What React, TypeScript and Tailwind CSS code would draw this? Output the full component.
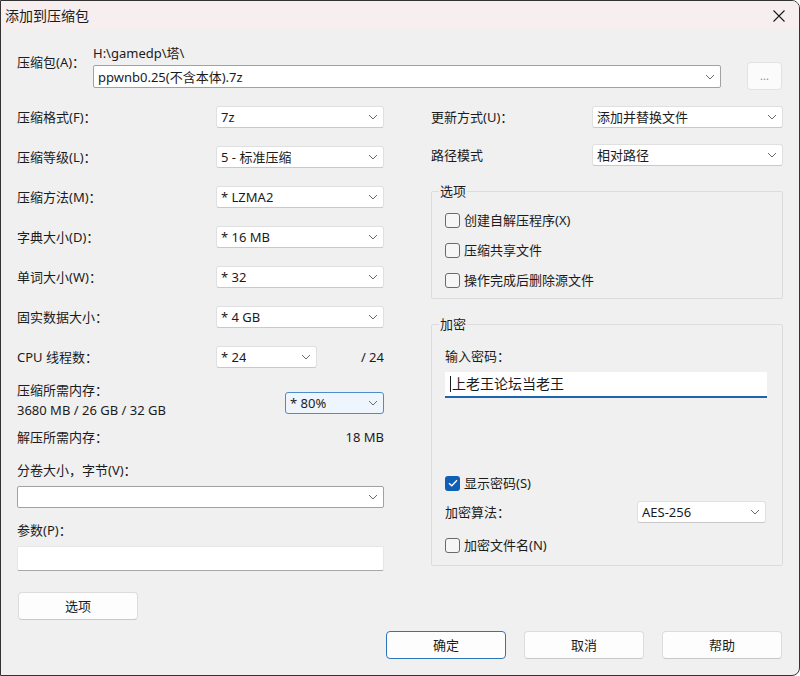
import type { ReactNode } from "react";

function Chevron() {
  return (
    <svg width="10" height="6" viewBox="0 0 10 6" className="shrink-0">
      <path d="M1 1 L5 5 L9 1" fill="none" stroke="#6b6b6b" strokeWidth="1" />
    </svg>
  );
}

type SelectProps = {
  value?: string;
  className?: string;
  tone?: "plain" | "edit" | "focus";
};

function Select({ value = "", className = "", tone = "plain" }: SelectProps) {
  const look =
    tone === "edit"
      ? "bg-white border-[#a2a2a2] rounded-[2px]"
      : tone === "focus"
        ? "bg-[#eef5fc] border-[#4b8ccb] rounded-[3px]"
        : "bg-white border-[#e0e0e0] border-b-[#c9c9c9] rounded-[3px]";
  return (
    <div className={`flex items-center justify-between h-[22px] pl-[4px] pr-[5px] border ${look} ${className}`}>
      <span className="truncate whitespace-pre">{value}</span>
      <Chevron />
    </div>
  );
}

function Check({ checked = false, children }: { checked?: boolean; children: ReactNode }) {
  return (
    <div className="flex items-center h-[18px] gap-[4px]">
      {checked ? (
        <span className="w-[15px] h-[15px] rounded-[3px] bg-[#0f5fb5] flex items-center justify-center">
          <svg width="10" height="8" viewBox="0 0 10 8">
            <path d="M1 4.2 L3.8 6.8 L9 1.2" fill="none" stroke="white" strokeWidth="1.3" />
          </svg>
        </span>
      ) : (
        <span className="w-[15px] h-[15px] rounded-[3px] border border-[#6a6a6a] bg-[#f6f6f6]" />
      )}
      <span>{children}</span>
    </div>
  );
}

function Button({ children, primary = false, className = "" }: { children: ReactNode; primary?: boolean; className?: string }) {
  return (
    <div
      className={`flex items-center justify-center h-[28px] w-[120px] rounded-[4px] bg-[#fdfdfd] border ${
        primary ? "border-[#2f74b8]" : "border-[#dcdcdc] border-b-[#c8c8c8]"
      } ${className}`}
    >
      {children}
    </div>
  );
}

function Row({ label, children, className = "h-[40px]" }: { label: string; children: ReactNode; className?: string }) {
  return (
    <div className={`flex items-center justify-between ${className}`}>
      <span>{label}</span>
      {children}
    </div>
  );
}

function Group({ title, children, className = "" }: { title: string; children: ReactNode; className?: string }) {
  return (
    <fieldset className={`border border-[#dcdcdc] rounded-[2px] pl-[7px] pr-[14px] ${className}`}>
      <legend className="px-[1px] leading-[18px] text-[13px]">{title}</legend>
      <div className="ml-[6px]">{children}</div>
    </fieldset>
  );
}

export default function App() {
  return (
    <div className="w-[800px] h-[676px] bg-white">
      <div className="w-full h-full flex flex-col border border-[#333] rounded-tr-[8px] rounded-br-[8px] overflow-hidden bg-[#f0f0f0] text-[#1b1b1b] text-[13px] leading-[18px] font-['Segoe_UI','Noto_Sans','Noto_Sans_CJK_SC',sans-serif]">
        {/* title bar */}
        <div className="h-[29px] shrink-0 flex items-center justify-between bg-[#f7efef] pl-[4px] pr-[14px]">
          <span className="text-[14px]">添加到压缩包</span>
          <svg width="12" height="12" viewBox="0 0 12 12">
            <path d="M0.5 0.5 L11.5 11.5 M11.5 0.5 L0.5 11.5" stroke="#1b1b1b" strokeWidth="1.1" />
          </svg>
        </div>

        <div className="px-[16px]">
          {/* archive path */}
          <div className="flex mt-[14px]">
            <span className="w-[76px] pt-[9px]">压缩包(A)：</span>
            <div className="w-[628px] flex flex-col">
              <span className="mb-[3px]">H:\gamedp\塔\</span>
              <Select value="ppwnb0.25(不含本体).7z" tone="edit" className="h-[23px]" />
            </div>
            <div className="ml-[26px] mt-[18px] w-[35px] h-[28px] rounded-[4px] border border-[#e2e2e2] bg-[#fbfbfb] flex items-center justify-center text-[#8a8a8a] text-[11px]">
              ...
            </div>
          </div>

          <div className="flex mt-[7px] gap-[47px]">
            {/* left column */}
            <div className="w-[367px] flex flex-col">
              <Row label="压缩格式(F)：">
                <Select value="7z" className="w-[168px]" />
              </Row>
              <Row label="压缩等级(L)：">
                <Select value="5 - 标准压缩" className="w-[168px]" />
              </Row>
              <Row label="压缩方法(M)：">
                <Select value="* LZMA2" className="w-[168px]" />
              </Row>
              <Row label="字典大小(D)：">
                <Select value="* 16 MB" className="w-[168px]" />
              </Row>
              <Row label="单词大小(W)：">
                <Select value="* 32" className="w-[168px]" />
              </Row>
              <Row label="固实数据大小：">
                <Select value="* 4 GB" className="w-[168px]" />
              </Row>
              <div className="flex items-center h-[40px]">
                <span className="w-[199px]">CPU 线程数：</span>
                <Select value="* 24" className="w-[101px]" />
                <span className="flex-1 text-right">/ 24</span>
              </div>

              <div className="flex justify-between mt-[4px]">
                <div className="flex flex-col gap-[2px]">
                  <span>压缩所需内存：</span>
                  <span>3680 MB / 26 GB / 32 GB</span>
                </div>
                <Select value="* 80%" tone="focus" className="w-[99px] mt-[11px] h-[21px]" />
              </div>
              <div className="flex justify-between mt-[9px]">
                <span>解压所需内存：</span>
                <span>18 MB</span>
              </div>

              <span className="mt-[15px]">分卷大小，字节(V)：</span>
              <Select tone="edit" className="mt-[7px]" />

              <span className="mt-[13px]">参数(P)：</span>
              <div className="mt-[7px] h-[25px] bg-white border border-[#e6e6e6] border-b-[#a8a8a8] rounded-[2px]" />

              <Button className="mt-[21px] ml-[1px] w-[119px] h-[27px]">选项</Button>
            </div>

            {/* right column */}
            <div className="w-[352px] flex flex-col">
              <Row label="更新方式(U)：">
                <Select value="添加并替换文件" className="w-[191px]" />
              </Row>
              <Row label="路径模式" className="h-[36px]">
                <Select value="相对路径" className="w-[191px]" />
              </Row>

              <Group title="选项" className="mt-[9px] pb-[9px]">
                <div className="flex flex-col mt-[11px] gap-[12px]">
                  <Check>创建自解压程序(X)</Check>
                  <Check>压缩共享文件</Check>
                  <Check>操作完成后删除源文件</Check>
                </div>
              </Group>

              <Group title="加密" className="mt-[16px] pb-[11px]">
                <div className="flex flex-col">
                  <span className="mt-[14px]">输入密码：</span>
                  <div className="mt-[7px] h-[26px] w-[322px] bg-white border-b-2 border-[#1a64b0] flex items-center pl-[5px] text-[14px]">
                    <span className="w-[1px] h-[16px] bg-[#1b1b1b] mr-[1px]" />
                    <span>上老王论坛当老王</span>
                  </div>
                  <div className="mt-[76px]">
                    <Check checked>显示密码(S)</Check>
                  </div>
                  <div className="flex items-center justify-between mt-[9px] w-[321px]">
                    <span>加密算法：</span>
                    <Select value="AES-256" className="w-[129px]" />
                  </div>
                  <div className="mt-[13px]">
                    <Check>加密文件名(N)</Check>
                  </div>
                </div>
              </Group>
            </div>
          </div>

          {/* dialog buttons */}
          <div className="flex justify-end gap-[18px] mt-[11px] mr-[1px]">
            <Button primary>确定</Button>
            <Button>取消</Button>
            <Button>帮助</Button>
          </div>
        </div>
      </div>
    </div>
  );
}
